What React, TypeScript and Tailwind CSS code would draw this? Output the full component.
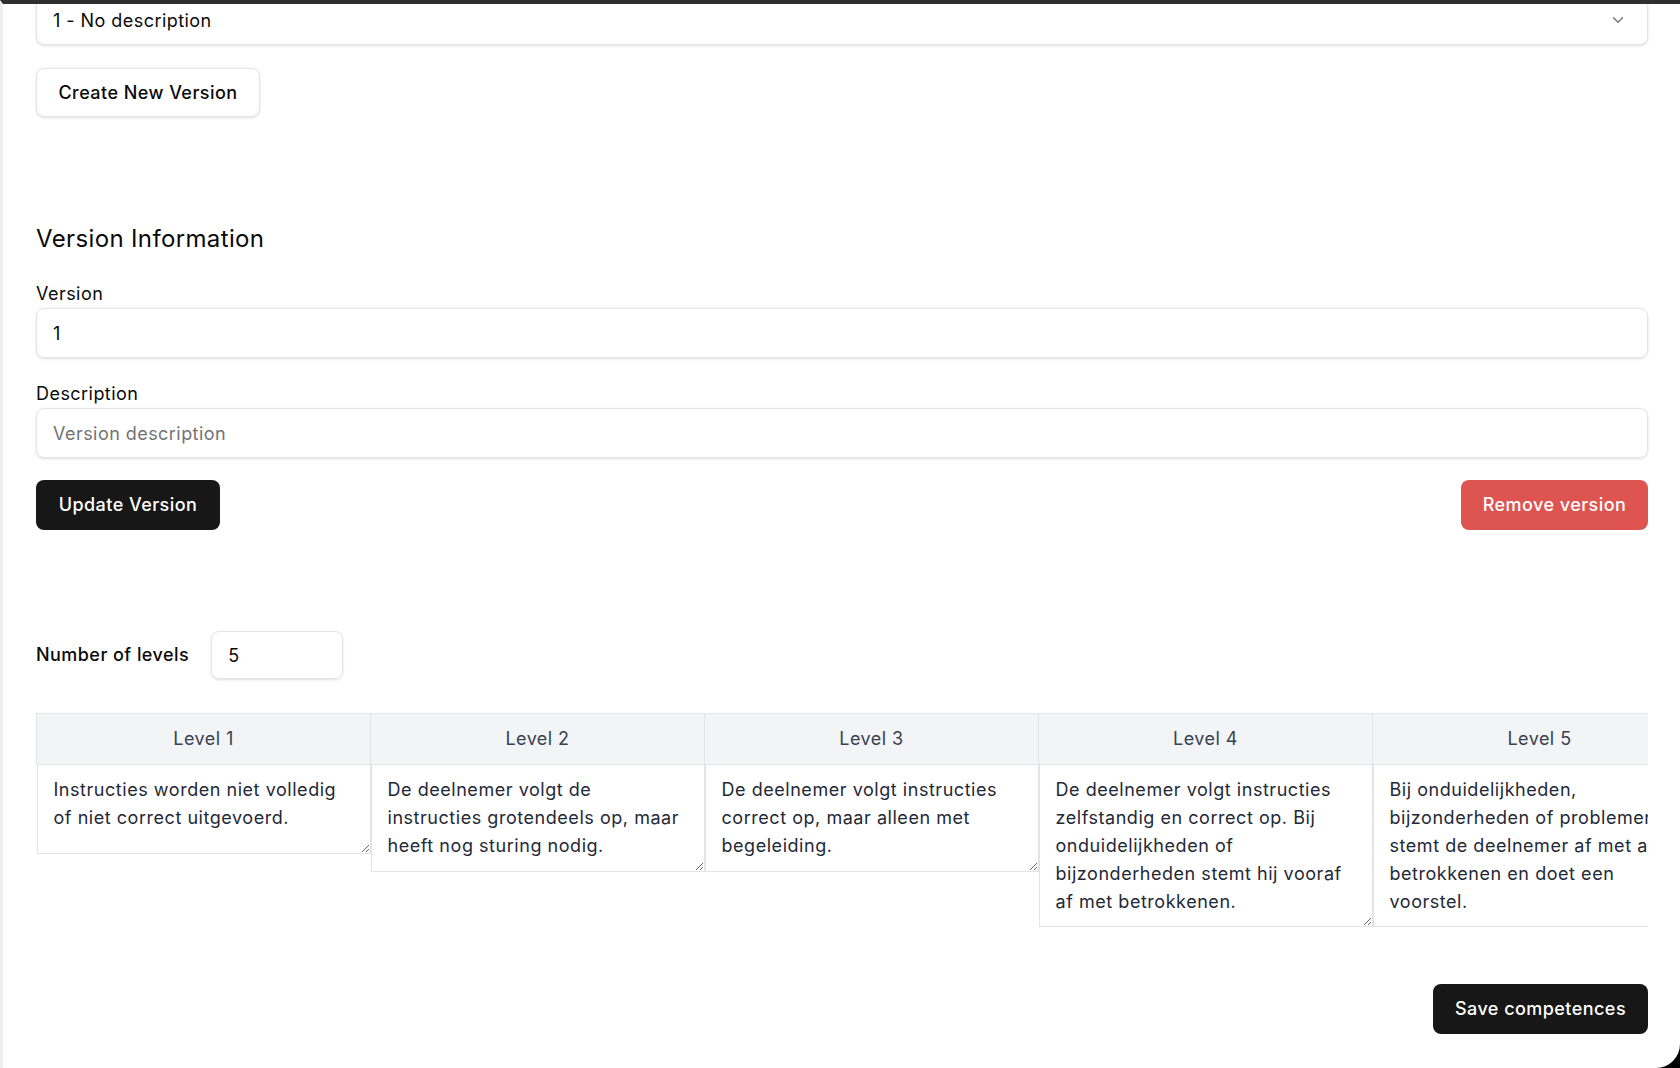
import React, { useState } from "react";
import { ChevronDown } from "lucide-react";

const levels = [
  {
    title: "Level 1",
    text: "Instructies worden niet volledig\nof niet correct uitgevoerd.",
    height: "h-[89px]",
  },
  {
    title: "Level 2",
    text: "De deelnemer volgt de\ninstructies grotendeels op, maar\nheeft nog sturing nodig.",
    height: "h-[107px]",
  },
  {
    title: "Level 3",
    text: "De deelnemer volgt instructies\ncorrect op, maar alleen met\nbegeleiding.",
    height: "h-[107px]",
  },
  {
    title: "Level 4",
    text: "De deelnemer volgt instructies\nzelfstandig en correct op. Bij\nonduidelijkheden of\nbijzonderheden stemt hij vooraf\naf met betrokkenen.",
    height: "h-[162px]",
  },
  {
    title: "Level 5",
    text: "Bij onduidelijkheden,\nbijzonderheden of problemen\nstemt de deelnemer af met alle\nbetrokkenen en doet een\nvoorstel.",
    height: "h-[162px]",
  },
];

const App = () => {
  const [version, setVersion] = useState("1");
  const [description, setDescription] = useState("");
  const [numLevels, setNumLevels] = useState("5");
  const [texts, setTexts] = useState(levels.map((l) => l.text));

  const handleTextChange = (index: number, value: string) => {
    const next = [...texts];
    next[index] = value;
    setTexts(next);
  };

  return (
    <div className="h-screen w-full bg-black font-['Inter',sans-serif] text-[18px] leading-[28px] tracking-[0.025em] text-[#0a0a0a]">
      <div className="h-full w-full overflow-hidden rounded-br-[24px] border-t-4 border-l-[3px] border-t-[#2f2f2f] border-l-[#efefef] bg-white pl-[33px] pr-[32px]">
        {/* version select */}
        <div className="-mt-[9px] flex h-[50px] items-center justify-between rounded-lg border border-[#e5e5e5] bg-white pl-4 pr-5 shadow-sm">
          <span className="pt-px">1 - No description</span>
          <ChevronDown className="h-[18px] w-[18px] text-[#7a7a7a]" strokeWidth={2} />
        </div>

        <button
          type="button"
          className="mt-[23px] flex h-[49px] w-[224px] items-center justify-center rounded-lg border border-[#e5e5e5] bg-white font-[450] shadow-sm"
        >
          Create New Version
        </button>

        <h2 className="mt-[106px] text-[24px] leading-[32px] font-normal tracking-[0.015em]">
          Version Information
        </h2>

        <div className="mt-[25px] flex flex-col">
          <label htmlFor="version">Version</label>
          <input
            id="version"
            type="text"
            value={version}
            onChange={(e) => setVersion(e.target.value)}
            className="h-[50px] rounded-lg border border-[#e5e5e5] px-4 shadow-sm outline-none"
          />
        </div>

        <div className="mt-[22px] flex flex-col">
          <label htmlFor="description">Description</label>
          <input
            id="description"
            type="text"
            placeholder="Version description"
            value={description}
            onChange={(e) => setDescription(e.target.value)}
            className="h-[50px] rounded-lg border border-[#e5e5e5] px-4 shadow-sm outline-none placeholder:text-[#737373]"
          />
        </div>

        <div className="mt-[22px] flex items-center justify-between">
          <button
            type="button"
            className="flex h-[50px] w-[184px] items-center justify-center rounded-lg bg-[#171717] font-[450] text-white"
          >
            Update Version
          </button>
          <button
            type="button"
            className="flex h-[50px] w-[187px] items-center justify-center rounded-lg bg-[#dd5450] font-[450] text-white"
          >
            Remove version
          </button>
        </div>

        <div className="mt-[101px] flex items-center gap-[22px]">
          <label htmlFor="levels" className="font-[450]">
            Number of levels
          </label>
          <input
            id="levels"
            type="text"
            value={numLevels}
            onChange={(e) => setNumLevels(e.target.value)}
            className="h-[48px] w-[132px] rounded-lg border border-[#e5e5e5] px-4 shadow-sm outline-none"
          />
        </div>

        <div className="mt-[34px] w-full overflow-x-auto [scrollbar-width:none]">
          <table className="w-[1670px] table-fixed border-collapse">
            <thead>
              <tr>
                {levels.map((l) => (
                  <th
                    key={l.title}
                    className="w-[334px] border border-[#e2e4e8] bg-[#f3f4f6] py-[11px] text-center font-normal text-[#374151]"
                  >
                    {l.title}
                  </th>
                ))}
              </tr>
            </thead>
            <tbody>
              <tr>
                {levels.map((l, i) => (
                  <td key={l.title} className="p-0 align-top">
                    <textarea
                      value={texts[i]}
                      onChange={(e) => handleTextChange(i, e.target.value)}
                      className={`block w-full ${l.height} border border-t-0 border-[#e2e4e8] pl-4 pr-2 pt-[11px] text-[#1f2937] tracking-[0.03em] outline-none`}
                    />
                  </td>
                ))}
              </tr>
            </tbody>
          </table>
        </div>

        <div className="mt-[57px] flex justify-end">
          <button
            type="button"
            className="flex h-[50px] w-[215px] items-center justify-center rounded-lg bg-[#171717] font-[450] text-white"
          >
            Save competences
          </button>
        </div>
      </div>
    </div>
  );
};

export default App;
